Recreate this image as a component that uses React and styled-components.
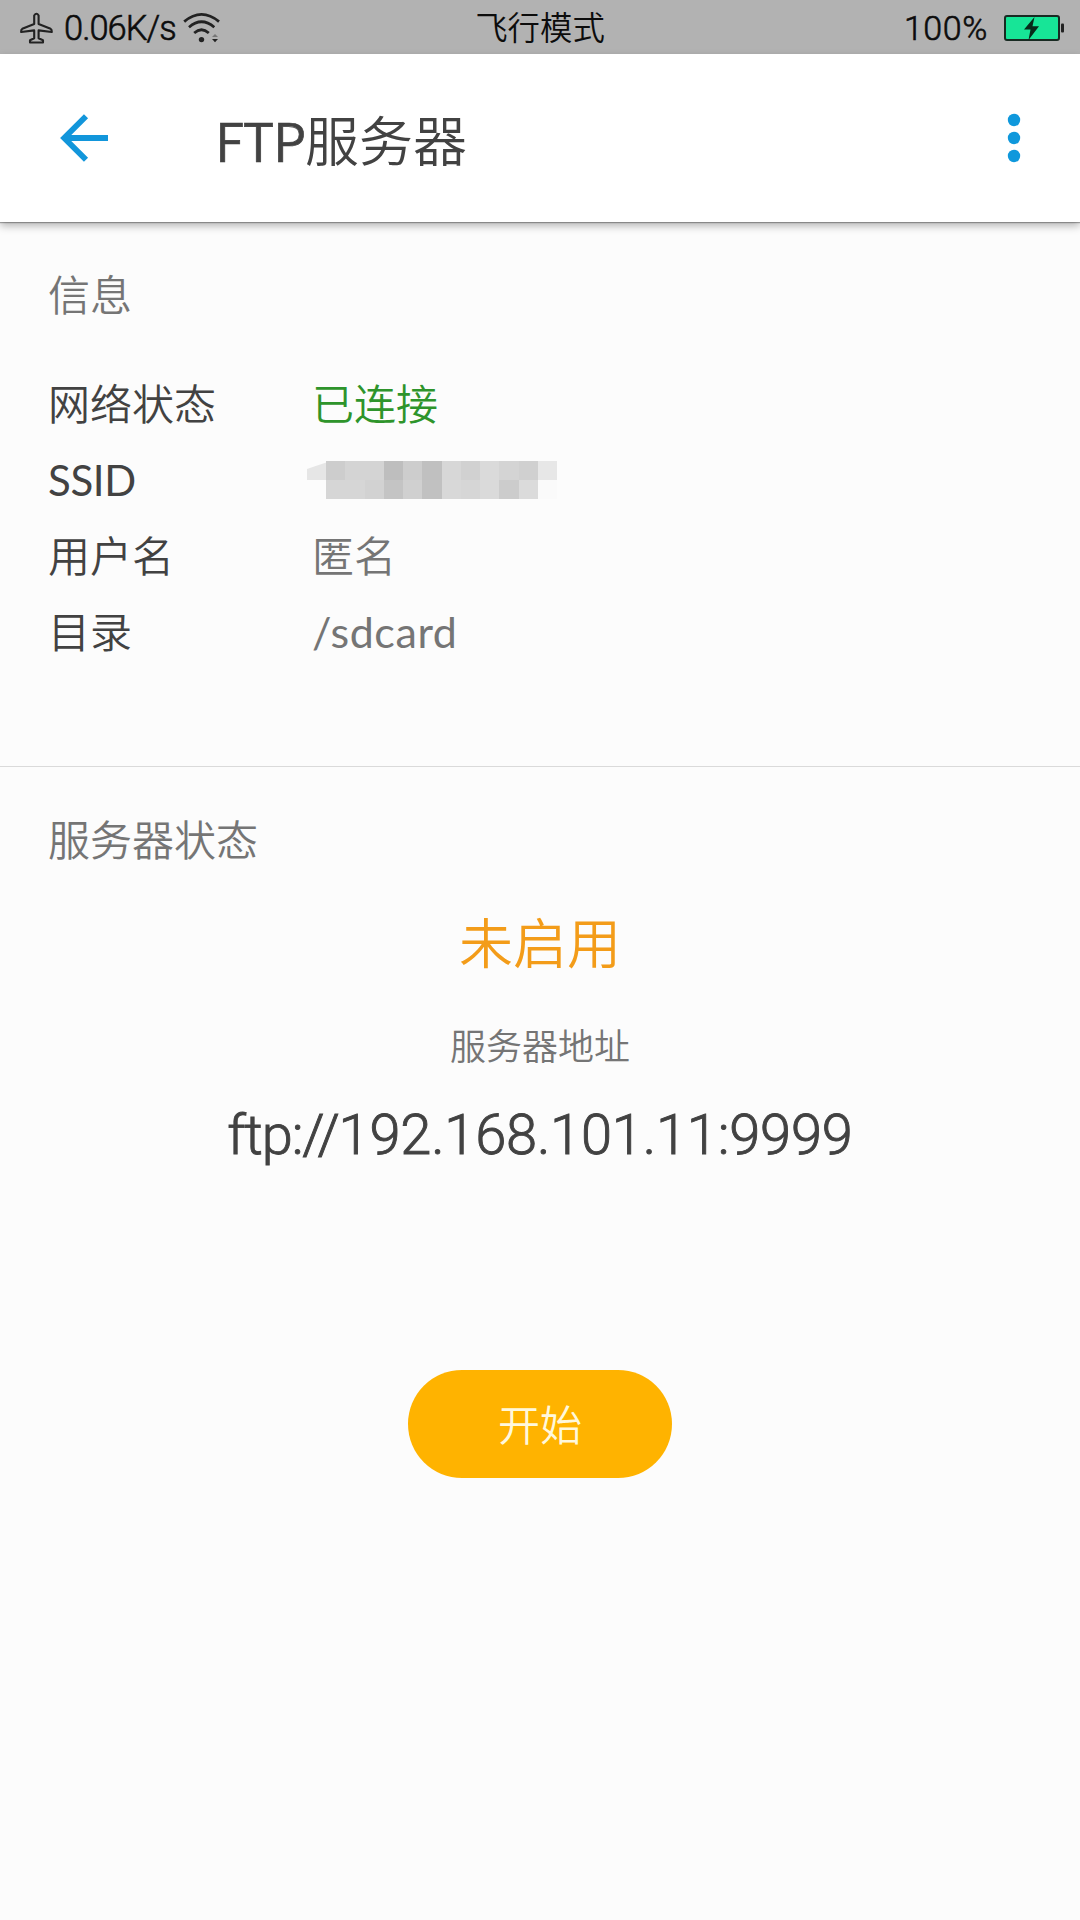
import React from "react";
import styled, { createGlobalStyle } from "styled-components";

const GlobalStyle = createGlobalStyle`
  * { box-sizing: border-box; }
  html, body { margin: 0; padding: 0; background: #fcfcfc; }
`;

const Screen = styled.div`
  width: 1080px;
  height: 1920px;
  overflow: hidden;
  display: flex;
  flex-direction: column;
  background: #fcfcfc;
  color: #424242;
  font-family: Roboto, "Noto Sans CJK SC DemiLight", "Noto Sans CJK SC", sans-serif;
  font-weight: 350;
  white-space: nowrap;
`;

const StatusBar = styled.header`
  height: 54px;
  flex: none;
  display: grid;
  grid-template-columns: 1fr auto 1fr;
  align-items: center;
  padding: 2px 16px 0;
  background: #b2b2b2;
  color: #0c0c0c;
  font-size: 32.4px;
  line-height: 48px;
`;

const StatusGroup = styled.div`
  display: flex;
  align-items: center;
  justify-content: ${(p) => (p.$end ? "flex-end" : "flex-start")};
  padding-left: ${(p) => (p.$end ? 0 : 4)}px;
`;

const Latin = styled.span`
  font-family: ${(p) => p.$family || "Roboto"}, sans-serif;
  font-size: ${(p) => p.$size}px;
  font-weight: ${(p) => p.$weight || 350};
  letter-spacing: ${(p) => p.$spacing || 0}px;
  -webkit-text-stroke: ${(p) => p.$stroke || 0}px currentColor;
`;

const Mode = styled.div`
  margin-top: 2px;
`;

const Speed = styled.div`
  margin: 1px 7px 0 11px;
`;

const Percent = styled.div`
  margin-right: 16px;
`;

const AppBar = styled.div`
  height: 168px;
  flex: none;
  display: flex;
  align-items: center;
  padding: 0 59px 0 60px;
  background: #fff;
  box-shadow: 0 1px 1px rgba(0, 0, 0, 0.3), 0 4px 8px rgba(0, 0, 0, 0.28);
`;

const IconButton = styled.button`
  display: flex;
  padding: 0;
  border: 0;
  background: none;
  color: #1296db;
`;

const Title = styled.h1`
  flex: 1;
  margin: 7px 0 0 105px;
  font-size: 54px;
  line-height: 72px;
  font-weight: inherit;
`;

const InfoSection = styled.section`
  height: 545px;
  flex: none;
  padding: 37px 48px 0;
  border-bottom: 1px solid #dadada;
`;

const SectionTitle = styled.h2`
  margin: 0;
  color: #757575;
  font-size: 42px;
  line-height: 76px;
  font-weight: inherit;
`;

const InfoList = styled.dl`
  margin: 33px 0 0;
`;

const InfoRow = styled.div`
  display: grid;
  grid-template-columns: 265px 1fr;
  height: 76px;
  font-size: 42px;
`;

const Label = styled.dt`
  line-height: ${(p) => p.$line || 76}px;
`;

const Value = styled.dd`
  margin: 0 0 0 -1px;
  line-height: ${(p) => p.$line || 76}px;
  color: ${(p) => p.$color || "#757575"};
`;

const Mosaic = styled.div`
  display: grid;
  grid-template-columns: repeat(13, 1fr);
  grid-auto-rows: 19px;
  width: 250px;
  margin: 17px 0 0 -5px;
`;

const Tile = styled.span`
  background: ${(p) => p.$tone};
  clip-path: ${(p) => (p.$cut ? "polygon(0 42%, 45% 26%, 100% 8%, 100% 100%, 0 100%)" : "none")};
`;

const ServerSection = styled.section`
  flex: 1;
  display: flex;
  flex-direction: column;
  align-items: center;
  padding: 37px 48px 0;
`;

const ServerTitle = styled(SectionTitle)`
  align-self: flex-start;
`;

const State = styled.div`
  margin-top: 28px;
  color: #f39c19;
  font-size: 54px;
  line-height: 76px;
`;

const AddressLabel = styled.div`
  margin-top: 34px;
  color: #757575;
  font-size: 36px;
  line-height: 60px;
`;

const Address = styled.div`
  margin-top: 19px;
  line-height: 76px;
`;

const StartButton = styled.button`
  width: 264px;
  height: 108px;
  flex: none;
  margin-top: 183px;
  padding: 0 0 4px;
  border: 0;
  border-radius: 54px;
  background: #ffb300;
  color: #fff8dc;
  font: inherit;
  font-size: 42px;
`;

const PlaneIcon = () => (
  <svg width="33" height="32" viewBox="0 0 33 32" fill="none" stroke="#222" strokeWidth="2.1" strokeLinejoin="round">
    <path d="M14.2 3.5Q16.5 0 18.6 3.5V12L30.6 16.8Q32 17.6 31.7 20L18.6 18.4V26.3L23 28.2V30.5H10V28.2L14.2 26.3V18.4L1.2 20Q.9 17.6 2.3 16.8L14.2 12Z" />
  </svg>
);

const WifiIcon = () => (
  <svg width="38" height="32" viewBox="0 0 38 32" fill="none" stroke="#222" strokeWidth="2.8">
    <path d="M1.2 9.6Q18.5-4.8 36 9.6M6 15.2Q18.5 4.4 31.3 15.2M11.2 21Q18.5 14.6 25.8 21" />
    <circle cx="18.5" cy="27.6" r="2.7" fill="#222" stroke="none" />
    <path d="M29 25.1L32 22L35 25.1Z" fill="#777" stroke="none" />
    <path d="M29 27L32 30.2L35 27Z" fill="#222" stroke="none" />
  </svg>
);

const BatteryIcon = () => (
  <svg width="60" height="26" viewBox="0 0 60 26">
    <rect x="1" y="1" width="54" height="24" rx="2" fill="#17e597" stroke="#182a22" strokeWidth="2" />
    <rect x="57" y="8.5" width="3" height="9" rx="1" fill="#222" />
    <path d="M30.5 2L20 14.5H26.5L24.5 25L35 11.2H28.5Z" fill="#082a1a" />
  </svg>
);

const BackIcon = () => (
  <svg width="50" height="50" viewBox="0 0 50 50" fill="none" stroke="currentColor">
    <path d="M26 3.2L4.2 25L26 46.8" strokeWidth="5.8" />
    <path d="M4 25H48" strokeWidth="6" />
  </svg>
);

const MoreIcon = () => (
  <svg width="14" height="50" viewBox="0 0 14 50" fill="#0f98dc">
    <circle cx="7" cy="7" r="6.2" />
    <circle cx="7" cy="25" r="6.2" />
    <circle cx="7" cy="43" r="6.2" />
  </svg>
);

const TONES = [
  "#e6e6e6", "#cdcdcd", "#d4d4d4", "#d4d4d4", "#bebebe", "#cdcdcd", "#c0c0c0", "#d7d7d7", "#d1d1d1", "#dadada", "#d4d4d4", "#d0d0d0", "#e7e7e7",
  "transparent", "#d6d6d6", "#d6d6d6", "#d2d2d2", "#c4c4c4", "#d0d0d0", "#c1c1c1", "#d8d8d8", "#d6d6d6", "#dadada", "#cccccc", "#dbdbdb", "#fafafa",
];

export default function App() {
  return (
    <Screen>
      <GlobalStyle />
      <StatusBar>
        <StatusGroup>
          <PlaneIcon />
          <Speed><Latin $size={34.5} $spacing={-1} $stroke={0.6}>0.06K/s</Latin></Speed>
          <WifiIcon />
        </StatusGroup>
        <Mode>飞行模式</Mode>
        <StatusGroup $end>
          <Percent><Latin $size={34} $spacing={0.6} $stroke={0.6}>100%</Latin></Percent>
          <BatteryIcon />
        </StatusGroup>
      </StatusBar>
      <AppBar>
        <IconButton aria-label="返回"><BackIcon /></IconButton>
        <Title><Latin $family={'"Noto Sans CJK SC"'} $size={53} $spacing={-1.2} $stroke={0.7}>FTP</Latin>服务器</Title>
        <IconButton aria-label="更多"><MoreIcon /></IconButton>
      </AppBar>
      <InfoSection>
        <SectionTitle>信息</SectionTitle>
        <InfoList>
          <InfoRow>
            <Label>网络状态</Label>
            <Value $color="#2e942b">已连接</Value>
          </InfoRow>
          <InfoRow>
            <Label $line={72}><Latin $family="Lato" $size={42} $weight={400} $spacing={-0.4}>SSID</Latin></Label>
            <Value>
              <Mosaic>
                {TONES.map((tone, i) => <Tile key={i} $tone={tone} $cut={i === 0} />)}
              </Mosaic>
            </Value>
          </InfoRow>
          <InfoRow>
            <Label>用户名</Label>
            <Value>匿名</Value>
          </InfoRow>
          <InfoRow>
            <Label>目录</Label>
            <Value $line={72}><Latin $family="Lato" $size={43} $weight={400} $spacing={0.6}>/sdcard</Latin></Value>
          </InfoRow>
        </InfoList>
      </InfoSection>
      <ServerSection>
        <ServerTitle>服务器状态</ServerTitle>
        <State>未启用</State>
        <AddressLabel>服务器地址</AddressLabel>
        <Address>
          <Latin $size={56} $spacing={-1.1} $stroke={0.9}>ftp://</Latin>
          <Latin $size={56} $spacing={-0.2} $stroke={0.9}>192.168.101.11:9999</Latin>
        </Address>
        <StartButton>开始</StartButton>
      </ServerSection>
    </Screen>
  );
}
